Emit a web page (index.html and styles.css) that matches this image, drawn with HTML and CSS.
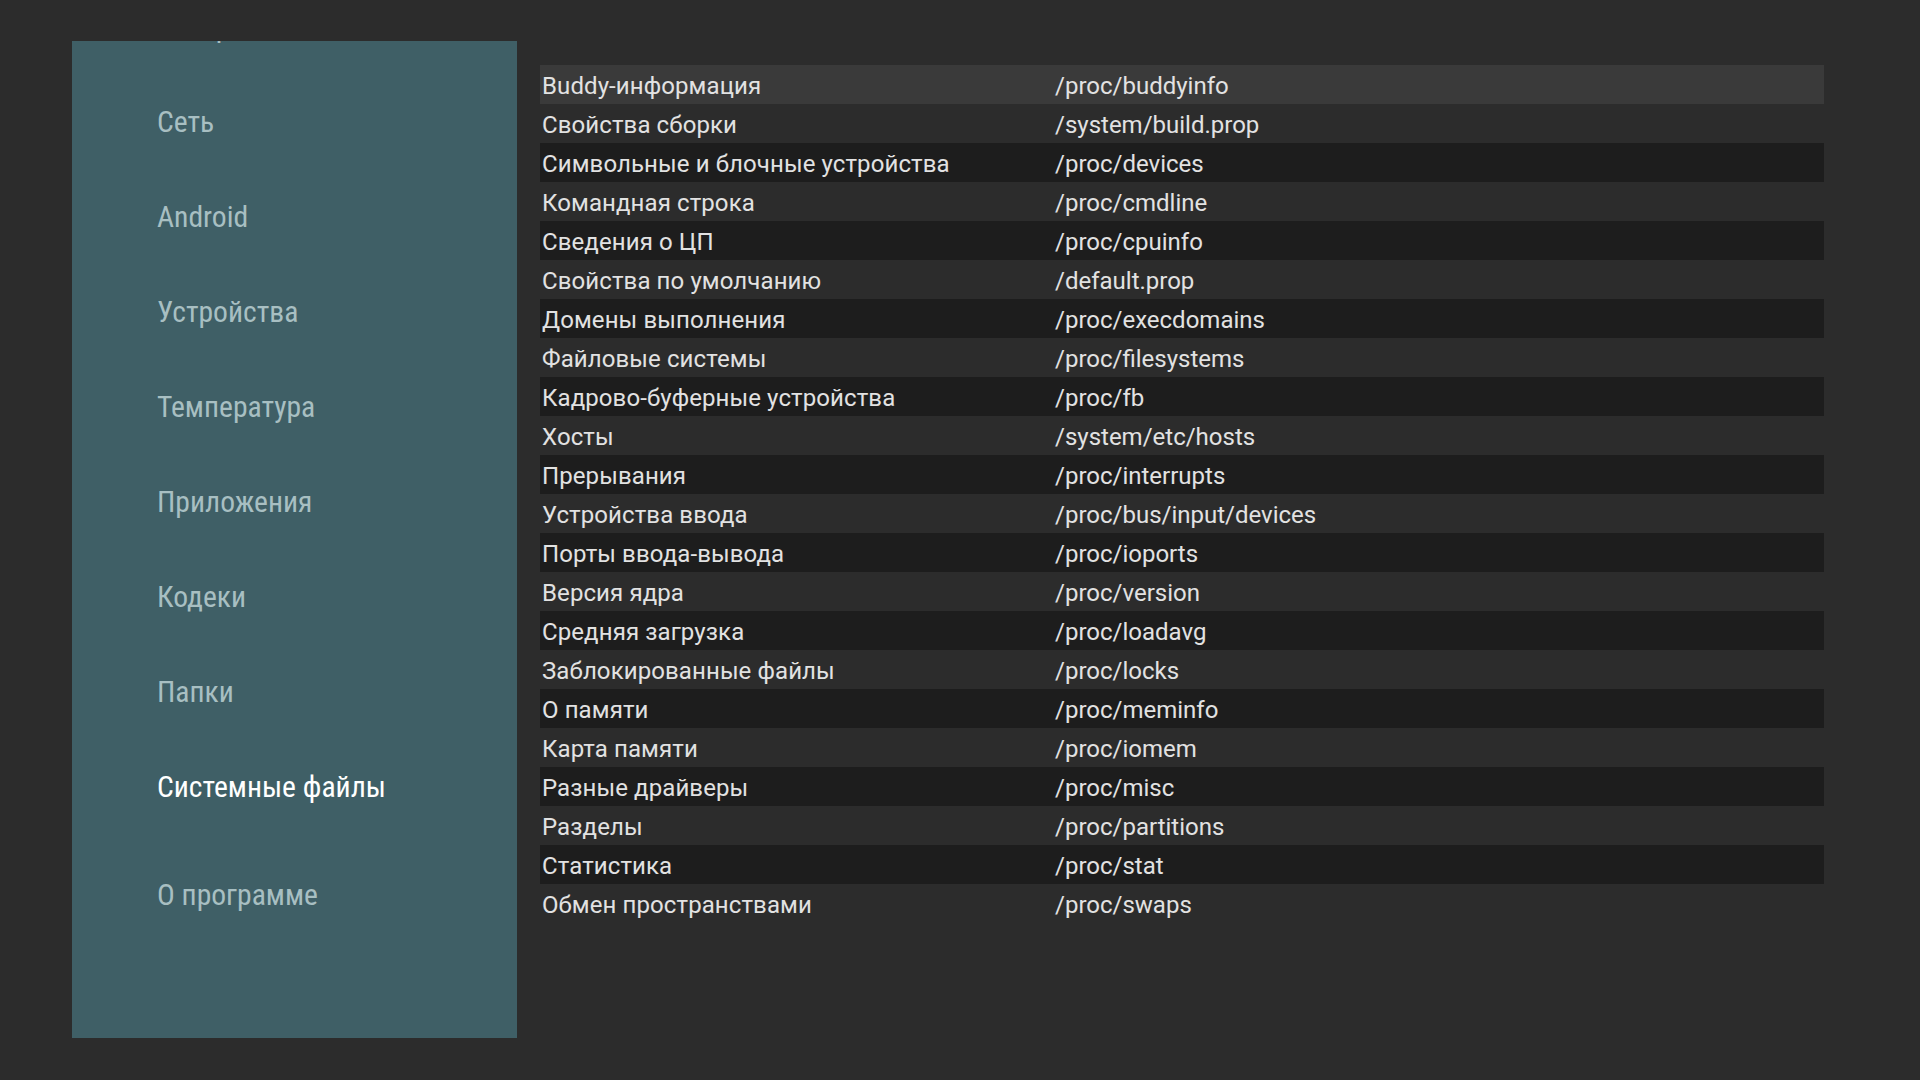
FILE: index.html
```html
<!DOCTYPE html>
<html lang="ru">
<head>
<meta charset="utf-8">
<title>Системные файлы</title>
<link rel="stylesheet" href="styles.css">
</head>
<body>
<div class="screen">
  <nav class="sidebar">
    <ul class="menu">
      <li class="menu-item">Отображение</li>
      <li class="menu-item">Сеть</li>
      <li class="menu-item">Android</li>
      <li class="menu-item">Устройства</li>
      <li class="menu-item">Температура</li>
      <li class="menu-item">Приложения</li>
      <li class="menu-item">Кодеки</li>
      <li class="menu-item">Папки</li>
      <li class="menu-item selected">Системные файлы</li>
      <li class="menu-item">О программе</li>
    </ul>
  </nav>
  <main class="content">
    <div class="table">
      <div class="row focused"><span class="name">Buddy-информация</span><span class="path">/proc/buddyinfo</span></div>
      <div class="row"><span class="name">Свойства сборки</span><span class="path">/system/build.prop</span></div>
      <div class="row dark"><span class="name">Символьные и блочные устройства</span><span class="path">/proc/devices</span></div>
      <div class="row"><span class="name">Командная строка</span><span class="path">/proc/cmdline</span></div>
      <div class="row dark"><span class="name">Сведения о ЦП</span><span class="path">/proc/cpuinfo</span></div>
      <div class="row"><span class="name">Свойства по умолчанию</span><span class="path">/default.prop</span></div>
      <div class="row dark"><span class="name">Домены выполнения</span><span class="path">/proc/execdomains</span></div>
      <div class="row"><span class="name">Файловые системы</span><span class="path">/proc/filesystems</span></div>
      <div class="row dark"><span class="name">Кадрово-буферные устройства</span><span class="path">/proc/fb</span></div>
      <div class="row"><span class="name">Хосты</span><span class="path">/system/etc/hosts</span></div>
      <div class="row dark"><span class="name">Прерывания</span><span class="path">/proc/interrupts</span></div>
      <div class="row"><span class="name">Устройства ввода</span><span class="path">/proc/bus/input/devices</span></div>
      <div class="row dark"><span class="name">Порты ввода-вывода</span><span class="path">/proc/ioports</span></div>
      <div class="row"><span class="name">Версия ядра</span><span class="path">/proc/version</span></div>
      <div class="row dark"><span class="name">Средняя загрузка</span><span class="path">/proc/loadavg</span></div>
      <div class="row"><span class="name">Заблокированные файлы</span><span class="path">/proc/locks</span></div>
      <div class="row dark"><span class="name">О памяти</span><span class="path">/proc/meminfo</span></div>
      <div class="row"><span class="name">Карта памяти</span><span class="path">/proc/iomem</span></div>
      <div class="row dark"><span class="name">Разные драйверы</span><span class="path">/proc/misc</span></div>
      <div class="row"><span class="name">Разделы</span><span class="path">/proc/partitions</span></div>
      <div class="row dark"><span class="name">Статистика</span><span class="path">/proc/stat</span></div>
      <div class="row"><span class="name">Обмен пространствами</span><span class="path">/proc/swaps</span></div>
    </div>
  </main>
</div>
</body>
</html>
```

FILE: styles.css
```css
html, body {
  margin: 0;
  padding: 0;
  height: 100%;
}

body {
  background: #2c2c2c;
  font-family: Roboto, "Noto Sans", sans-serif;
  overflow: hidden;
}

.screen {
  display: flex;
  align-items: flex-start;
  height: 1080px;
  box-sizing: border-box;
  padding: 41px 96px 0 72px;
}

.sidebar {
  width: 445px;
  height: 997px;
  flex: none;
  background: #3f5f66;
  overflow: hidden;
}

.menu {
  list-style: none;
  margin: -62px 0 0 0;
  padding: 0 0 0 85px;
}

.menu-item {
  height: 95px;
  display: flex;
  align-items: center;
  font-family: "Roboto Condensed", "DejaVu Sans Condensed", Roboto, sans-serif;
  font-size: 29.6px;
  color: #a8bfc2;
}

.menu-item.selected {
  color: #ffffff;
  margin-bottom: 13px;
}

.content {
  flex: 1;
  padding: 24px 0 0 23px;
}

.row {
  display: flex;
  height: 39px;
  box-sizing: border-box;
  padding: 3px 0 0 2px;
  align-items: center;
  font-size: 24px;
  letter-spacing: 0.1px;
  color: #e2e2e2;
}

.row.focused {
  background: #3a3a3a;
}

.row.dark {
  background: #1d1d1d;
}

.name {
  width: 513px;
  flex: none;
  white-space: nowrap;
}

.path {
  white-space: nowrap;
  letter-spacing: 0;
}
```
